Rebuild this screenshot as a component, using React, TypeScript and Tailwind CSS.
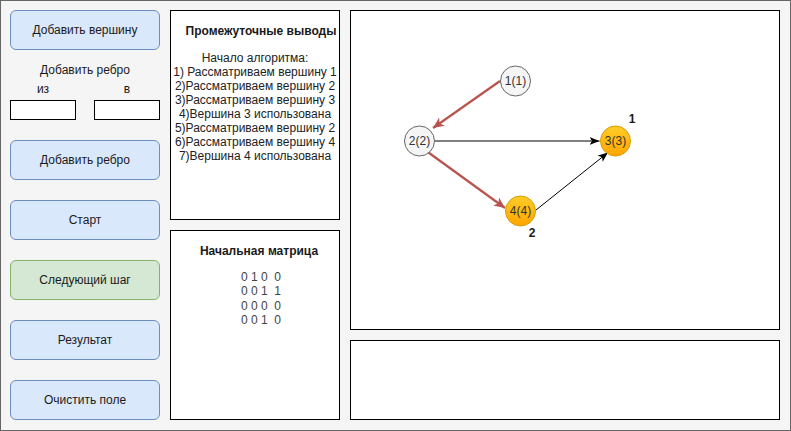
import React from "react";

const FONT = { fontFamily: '"Liberation Sans", Arial, sans-serif' };

function ActionButton({ label, green }: { label: string; green?: boolean }) {
  return (
    <button
      type="button"
      className={
        green
          ? "h-10 w-full rounded-md border border-[#82b366] bg-[#d5e8d4] text-[12px] text-[#1a1a1a]"
          : "h-10 w-full rounded-md border border-[#6c8ebf] bg-[#dae8fc] text-[12px] text-[#1a1a1a]"
      }
    >
      {label}
    </button>
  );
}

const STEPS = [
  "Начало алгоритма:",
  "1) Рассматриваем вершину 1",
  "2)Рассматриваем вершину 2",
  "3)Рассматриваем вершину 3",
  "4)Вершина 3 использована",
  "5)Рассматриваем вершину 2",
  "6)Рассматриваем вершину 4",
  "7)Вершина 4 использована",
];

const MATRIX = ["0 1 0  0", "0 0 1  1", "0 0 0  0", "0 0 1  0"];

type Node = { id: string; x: number; y: number; done?: boolean };

const NODES: Node[] = [
  { id: "1(1)", x: 515.5, y: 81 },
  { id: "2(2)", x: 419.5, y: 141 },
  { id: "3(3)", x: 615.5, y: 141, done: true },
  { id: "4(4)", x: 520.5, y: 211, done: true },
];

function Graph() {
  return (
    <svg
      className="block h-full w-full"
      viewBox="351 11 428 318"
      style={FONT}
    >
      <defs>
        <linearGradient id="orange" x1="0" y1="0" x2="0" y2="1">
          <stop offset="0" stopColor="#ffcd28" />
          <stop offset="1" stopColor="#ffa500" />
        </linearGradient>
        <marker
          id="arrowBlack"
          markerUnits="userSpaceOnUse"
          markerWidth="12"
          markerHeight="10"
          refX="10"
          refY="4"
          orient="auto"
        >
          <path d="M0,0 L10,4 L0,8 L2.5,4 Z" fill="#000" />
        </marker>
        <marker
          id="arrowRed"
          markerUnits="userSpaceOnUse"
          markerWidth="14"
          markerHeight="12"
          refX="11"
          refY="5"
          orient="auto"
        >
          <path d="M0,0 L11,5 L0,10 L3,5 Z" fill="#b85450" />
        </marker>
      </defs>

      <line x1="500" y1="81" x2="433" y2="128" stroke="#b85450" strokeWidth="2.2" markerEnd="url(#arrowRed)" />
      <line x1="425" y1="150" x2="505" y2="208" stroke="#b85450" strokeWidth="2.2" markerEnd="url(#arrowRed)" />
      <line x1="435" y1="141" x2="599.5" y2="141" stroke="#000" strokeWidth="1" markerEnd="url(#arrowBlack)" />
      <line x1="536" y1="210" x2="608" y2="152.5" stroke="#000" strokeWidth="1" markerEnd="url(#arrowBlack)" />

      {NODES.map((n) => (
        <g key={n.id}>
          <circle
            cx={n.x}
            cy={n.y}
            r="15"
            fill={n.done ? "url(#orange)" : "#f5f5f5"}
            stroke={n.done ? "#d79b00" : "#666666"}
            strokeWidth="1"
          />
          <text
            x={n.x}
            y={n.y + 4}
            textAnchor="middle"
            fontSize="12"
            fill="#333333"
          >
            {n.id}
          </text>
        </g>
      ))}

      <text x="632" y="123" textAnchor="middle" fontSize="12" fontWeight="bold" fill="#1a1a1a">
        1
      </text>
      <text x="532" y="237" textAnchor="middle" fontSize="12" fontWeight="bold" fill="#1a1a1a">
        2
      </text>
    </svg>
  );
}

export default function App() {
  return (
    <div
      className="flex h-[431px] w-[791px] gap-[10px] border border-[#666666] bg-[#f5f5f5] pl-[9px] pt-[9px] text-[#1a1a1a]"
      style={FONT}
    >
      {/* left column with controls */}
      <div className="flex w-[150px] flex-col">
        <ActionButton label="Добавить вершину" />
        <p className="mt-[13px] text-center text-[12px] leading-[14px]">Добавить ребро</p>
        <div className="mt-[5px] flex justify-between text-[12px] leading-[14px]">
          <span className="w-[66px] text-center">из</span>
          <span className="w-[66px] text-center">в</span>
        </div>
        <div className="mt-[4px] flex justify-between">
          <input className="h-5 w-[66px] border border-black bg-white" type="text" />
          <input className="h-5 w-[66px] border border-black bg-white" type="text" />
        </div>
        <div className="mt-5 flex flex-col gap-5">
          <ActionButton label="Добавить ребро" />
          <ActionButton label="Старт" />
          <ActionButton label="Следующий шаг" green />
          <ActionButton label="Результат" />
          <ActionButton label="Очистить поле" />
        </div>
      </div>

      {/* middle column */}
      <div className="flex w-[170px] flex-col gap-[10px]">
        <section className="h-[210px] border border-black bg-white">
          <h3 className="mt-[13px] pl-3 text-center text-[12px] font-bold leading-[14px]">
            Промежуточные выводы
          </h3>
          <div className="mt-[13px] text-center text-[12px] leading-[14px] text-[#222]">
            {STEPS.map((s) => (
              <div key={s} className="whitespace-nowrap">
                {s}
              </div>
            ))}
          </div>
        </section>
        <section className="h-[190px] border border-black bg-white">
          <h3 className="mt-[13px] pl-2 text-center text-[12px] font-bold leading-[14px]">
            Начальная матрица
          </h3>
          <div className="mt-[12px] pl-3 text-center text-[12px] leading-[14.3px] text-[#444]">
            {MATRIX.map((row, i) => (
              <div key={i} className="whitespace-pre">
                {row}
              </div>
            ))}
          </div>
        </section>
      </div>

      {/* right column */}
      <div className="flex w-[430px] flex-col gap-[10px]">
        <section className="h-[320px] border border-black bg-white">
          <Graph />
        </section>
        <section className="h-[80px] border border-black bg-white" />
      </div>
    </div>
  );
}
